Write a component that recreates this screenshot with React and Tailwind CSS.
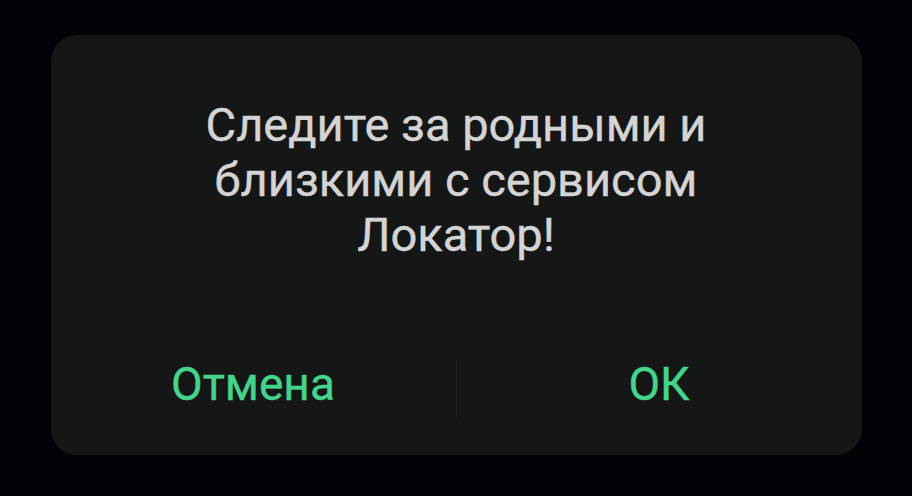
export default function App() {
  return (
    <div className="w-[912px] h-[496px] bg-[#030307] flex items-start justify-center pt-[35px]" style={{ fontFamily: 'Roboto, "Noto Sans", sans-serif' }}>
      <div className="w-[811px] h-[420px] bg-[#151616] rounded-[26px] flex flex-col">
        <div className="h-[290px] flex items-start justify-center pt-[62px]">
          <p className="text-[47px] leading-[55px] text-[#d4d4d4] text-center [-webkit-text-stroke:0.4px_#d4d4d4]">
            Следите за родными и<br />близкими с сервисом<br />Локатор!
          </p>
        </div>
        <div className="flex-1 flex items-center">
          <div className="flex-1 flex justify-center text-[46px] text-[#44d48b] pb-[11px] [-webkit-text-stroke:0.4px_#44d48b]">Отмена</div>
          <div className="w-px h-[60px] bg-[#1c1d1d]" />
          <div className="flex-1 flex justify-center text-[46px] text-[#44d48b] pb-[11px] [-webkit-text-stroke:0.4px_#44d48b]">ОК</div>
        </div>
      </div>
    </div>
  );
}
